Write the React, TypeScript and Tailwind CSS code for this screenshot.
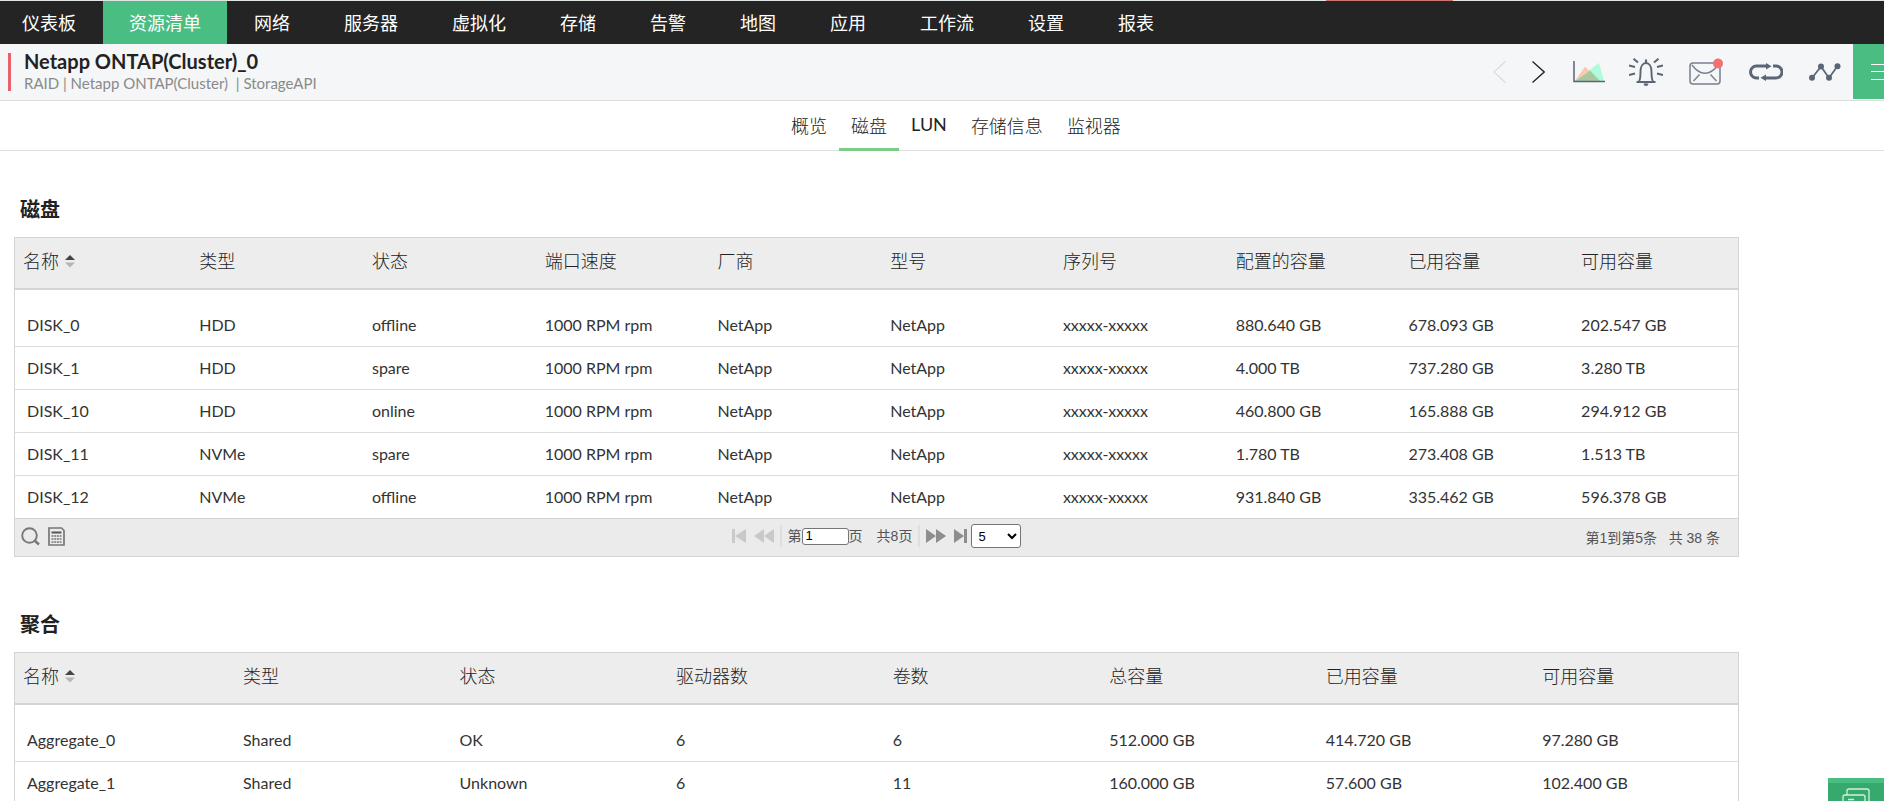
import { useState } from "react";

interface TableData {
    title: string;
    columns: string[];
    rows: string[][];
    total?: number;
    pages?: number;
    colClass: string;
}

const navItems = ["仪表板", "资源清单", "网络", "服务器", "虚拟化", "存储", "告警", "地图", "应用", "工作流", "设置", "报表"];
const tabs = ["概览", "磁盘", "LUN", "存储信息", "监视器"];

const disks: TableData = {
    title: "磁盘",
    columns: ["名称", "类型", "状态", "端口速度", "厂商", "型号", "序列号", "配置的容量", "已用容量", "可用容量"],
    rows: [
        ["DISK_0", "HDD", "offline", "1000 RPM rpm", "NetApp", "NetApp", "xxxxx-xxxxx", "880.640 GB", "678.093 GB", "202.547 GB"],
        ["DISK_1", "HDD", "spare", "1000 RPM rpm", "NetApp", "NetApp", "xxxxx-xxxxx", "4.000 TB", "737.280 GB", "3.280 TB"],
        ["DISK_10", "HDD", "online", "1000 RPM rpm", "NetApp", "NetApp", "xxxxx-xxxxx", "460.800 GB", "165.888 GB", "294.912 GB"],
        ["DISK_11", "NVMe", "spare", "1000 RPM rpm", "NetApp", "NetApp", "xxxxx-xxxxx", "1.780 TB", "273.408 GB", "1.513 TB"],
        ["DISK_12", "NVMe", "offline", "1000 RPM rpm", "NetApp", "NetApp", "xxxxx-xxxxx", "931.840 GB", "335.462 GB", "596.378 GB"],
    ],
    total: 38,
    pages: 8,
    colClass: "w-[10.02%]",
};

const aggregates: TableData = {
    title: "聚合",
    columns: ["名称", "类型", "状态", "驱动器数", "卷数", "总容量", "已用容量", "可用容量"],
    rows: [
        ["Aggregate_0", "Shared", "OK", "6", "6", "512.000 GB", "414.720 GB", "97.280 GB"],
        ["Aggregate_1", "Shared", "Unknown", "6", "11", "160.000 GB", "57.600 GB", "102.400 GB"],
    ],
    colClass: "w-[12.56%]",
};

function ChartIcon() {
    return (
        <svg width="32" height="22" viewBox="0 0 32 22">
            <path d="M2 20 12 6l15 14z" fill="#fbc9b0" />
            <path d="M2 20 26 2l5 18z" fill="#affbdc" />
            <path d="M2 20 17 9.500 27 20z" fill="#a9c8a0" />
            <path d="M2 20 12 6l4.500 3.800z" fill="#fbc9b0" />
            <path d="M1 0v20.500h31" fill="none" stroke="#56657a" strokeWidth="1.500" />
        </svg>
    );
}

function BellIcon() {
    return (
        <svg width="34" height="28" viewBox="0 0 34 28" fill="none" stroke="#5a6675" strokeWidth="1.900">
            <path d="M7.500 24h19M10 23.500c1.300-2 1.500-4 1.500-10 0-5.500 2.500-8.500 5.500-8.500s5.500 3 5.500 8.500c0 6 .2 8 1.500 10" />
            <path d="M17 5V1.500M15.500 25.500c.3 1.800 2.700 1.800 3 0" strokeWidth="2.200" />
            <path d="M4.500.8 9 4.500M29.500.8 25 4.500M0 7.500l6 1.500M34 7.500 28 9M0 17l6-1.500M34 17l-6-1.500" strokeWidth="2.100" />
        </svg>
    );
}

function MailIcon() {
    return (
        <svg width="34" height="28" viewBox="0 0 34 28">
            <rect x="1" y="5" width="30" height="21" rx="3" fill="none" stroke="#77808d" strokeWidth="1.500" />
            <path d="M3 7c8 11 18 11 26 0M4.500 23l6-6.500M27.500 23l-6-6.500" fill="none" stroke="#77808d" strokeWidth="1.400" />
            <circle cx="29" cy="5.500" r="5" fill="#f57070" />
        </svg>
    );
}

function LoopIcon() {
    return (
        <svg width="34" height="18" viewBox="0 0 34 18">
            <path d="M10 15H7.500a5.500 5.500 0 0 1 0-12H18M24 3h3a5.500 5.500 0 0 1 0 12H15" fill="none" stroke="#5a6675" strokeWidth="3" />
            <path d="M17 0l5.500 3.200L17 6.500zM17 11.500l-5.500 3.300L17 18z" fill="#5a6675" />
        </svg>
    );
}

function LineIcon() {
    return (
        <svg width="32" height="18" viewBox="0 0 32 18">
            <path d="M3 15 12 3.500 20 15 28.500 3" fill="none" stroke="#5a6675" strokeWidth="1.700" />
            <circle cx="3" cy="14.800" r="3" fill="#5a6675" />
            <circle cx="12" cy="3.500" r="3" fill="#5a6675" />
            <circle cx="20" cy="14.800" r="3" fill="#5a6675" />
            <circle cx="28.500" cy="3.200" r="3" fill="#5a6675" />
        </svg>
    );
}

function SortIcon() {
    return (
        <svg width="10" height="14" viewBox="0 0 10 14">
            <path d="M0 6 5 1l5 5z" fill="#444" />
            <path d="M0 8.500h10l-5 5z" fill="#b5b5b5" />
        </svg>
    );
}

function Pager({ total, pages }: { total: number; pages: number }) {
    const [page, setPage] = useState("1");
    const [size, setSize] = useState("5");

    return (
        <div className="-mt-px grid h-[39px] grid-cols-[1fr_auto_1fr] items-center border border-[#d4d4d4] bg-[#ebebeb] font-['Liberation_Sans','Noto_Sans_CJK_SC',sans-serif] text-sm text-[#555]">
            <div className="flex items-center gap-2 pb-[3px] pl-1.5">
                <button aria-label="search">
                    <svg width="19" height="19" viewBox="0 0 19 19" fill="none" stroke="#777" strokeWidth="1.900">
                        <circle cx="8.500" cy="8.500" r="7.300" />
                        <path d="m13.500 13.500 4.500 4" strokeWidth="2.400" />
                    </svg>
                </button>
                <button aria-label="columns">
                    <svg width="17" height="19" viewBox="0 0 17 19" fill="none" stroke="#777">
                        <path d="M1 1h12.500L16 3.500V18H1z" strokeWidth="1.700" />
                        <path d="M3.500 5.500h10" strokeWidth="2" stroke="#555" />
                        <path d="M3.500 9h10M3.500 12h10M3.500 15h10" strokeWidth="1.600" strokeDasharray="2 .7" />
                    </svg>
                </button>
            </div>
            <div className="flex items-center pb-[3px]">
                <button aria-label="first page" className="mr-2">
                    <svg width="14" height="14" viewBox="0 0 14 14" fill="#c9c9c9"><path d="M0 0h3v14H0zM14 0v14L3 7z" /></svg>
                </button>
                <button aria-label="previous page">
                    <svg width="20" height="14" viewBox="0 0 20 14" fill="#c9c9c9"><path d="M10 0v14L0 7zM20 0v14L10 7z" /></svg>
                </button>
                <span className="mx-1.5 h-[22px] w-0.5 bg-[#dedede]" />
                <label className="flex items-center">
                    第
                    <input
                        value={page}
                        onChange={(e) => setPage(e.target.value)}
                        className="h-[17px] w-[47px] rounded-[3px] border border-[#767676] bg-white px-[3px] text-[13px] text-black"
                    />
                    页
                </label>
                <span className="ml-3.5">共{pages}页</span>
                <span className="mx-1.5 h-[22px] w-0.5 bg-[#dedede]" />
                <button aria-label="next page" className="mr-2">
                    <svg width="20" height="14" viewBox="0 0 20 14" fill="#8e8e8e"><path d="M0 0v14l10-7zM10 0v14l10-7z" /></svg>
                </button>
                <button aria-label="last page">
                    <svg width="13" height="14" viewBox="0 0 13 14" fill="#8e8e8e"><path d="M0 0v14l10-7zM10 0h3v14h-3z" /></svg>
                </button>
                <select
                    aria-label="page size"
                    value={size}
                    onChange={(e) => setSize(e.target.value)}
                    className="ml-1 h-6 w-[50px] rounded-[3px] border border-[#767676] bg-white pl-0.5 text-[13px] text-black"
                >
                    <option>5</option>
                    <option>10</option>
                    <option>25</option>
                </select>
            </div>
            <div className="pr-[18px] text-right whitespace-pre">第1到第5条   共 {total} 条</div>
        </div>
    );
}

function DataTable({ data }: { data: TableData }) {
    return (
        <section className="mb-[53px]">
            <h2 className="mb-[14px] ml-1.5 text-xl leading-7 font-bold text-[#222]">{data.title}</h2>
            <table className="w-full table-fixed border-collapse border border-[#d4d4d4] text-left">
                <thead>
                    <tr className="h-[51px] border-b-2 border-[#d4d4d4] bg-[#ededed] text-[#222]">
                        {data.columns.map((col, i) => (
                            <th
                                key={col}
                                className={i === 0 ? `${data.colClass} pb-1 pl-2 text-lg leading-7 font-light` : i < data.columns.length - 1 ? `${data.colClass} pb-1 pl-3 text-lg leading-7 font-light` : "pb-1 pl-3 text-lg leading-7 font-light"}
                            >
                                {i === 0 ? (
                                    <button className="flex items-center gap-1.5">{col}<SortIcon /></button>
                                ) : col}
                            </th>
                        ))}
                    </tr>
                </thead>
                <tbody>
                    {data.rows.map((row) => (
                        <tr key={row[0]} className="h-[43px] border-b border-[#dcdcdc] first:h-[58px]">
                            {row.map((cell, i) => (
                                <td key={i} className="pb-[9px] pl-3 align-bottom text-base leading-6">{cell}</td>
                            ))}
                        </tr>
                    ))}
                </tbody>
            </table>
            {data.total && data.pages && <Pager total={data.total} pages={data.pages} />}
        </section>
    );
}

export default function App() {
    const [activeTab, setActiveTab] = useState("磁盘");

    return (
        <div className="h-screen overflow-hidden bg-white font-['Lato','Noto_Sans_CJK_SC',sans-serif] text-[#333]">
            <nav className="relative flex h-11 border-t border-[#dfe5e3] bg-[#242424] text-lg text-white">
                {navItems.map((item, i) => (
                    <a
                        key={item}
                        href="#"
                        className={i === 0 ? "flex items-center pr-[27px] pl-[22px]" : item === "资源清单" ? "flex items-center bg-[#4abd82] px-[26px]" : "flex items-center px-[27px]"}
                    >
                        {item}
                    </a>
                ))}
                {/* red marker on the top edge */}
                <span className="absolute -top-px right-[431px] h-px w-[127px] bg-[#cf7470]" />
            </nav>

            <header className="flex h-[57px] border-b border-[#dcdfe1] bg-[#f4f6f8]">
                <div className="mt-[9px] ml-2 h-[38px] border-l-3 border-[#e8606a] pl-[13px]">
                    <h1 className="-mt-1 text-xl leading-6 font-bold text-[#222]">Netapp ONTAP(Cluster)_0</h1>
                    <p className="text-[15px] leading-5 whitespace-pre text-[#8a8a8a]">RAID | Netapp ONTAP(Cluster)  | StorageAPI</p>
                </div>
                <div className="ml-auto flex items-center">
                    <button aria-label="previous" className="mr-[26px]">
                        <svg width="13" height="22" viewBox="0 0 13 22" fill="none" stroke="#dcdcdc" strokeWidth="1.200"><path d="M12.500.5.8 11l11.700 10.500" /></svg>
                    </button>
                    <button aria-label="next" className="mr-7">
                        <svg width="13" height="22" viewBox="0 0 13 22" fill="none" stroke="#222" strokeWidth="1.300"><path d="M.5.5 12.200 11 .5 21.500" /></svg>
                    </button>
                    <button aria-label="chart" className="mr-6"><ChartIcon /></button>
                    <button aria-label="alarms" className="mr-[26px]"><BellIcon /></button>
                    <button aria-label="mail" className="mr-[26px]"><MailIcon /></button>
                    <button aria-label="links" className="mr-[26px]"><LoopIcon /></button>
                    <button aria-label="trend" className="mr-3"><LineIcon /></button>
                    <button aria-label="menu" className="flex h-[55px] w-[31px] justify-end self-start bg-[#4abd82] pt-5">
                        <svg width="13" height="16" viewBox="0 0 13 16" stroke="#fff"><path d="M0 .5h13M0 7.500h13M0 15.500h13" /></svg>
                    </button>
                </div>
            </header>

            <div className="flex h-[50px] justify-center border-b border-[#dfe0e1] pl-7 text-lg text-[#222]">
                {tabs.map((tab) => (
                    <button
                        key={tab}
                        onClick={() => setActiveTab(tab)}
                        className={activeTab === tab ? "-mb-px border-b-3 border-[#7bcb86] px-3 font-['Noto_Sans_CJK_SC',sans-serif] font-light" : tab === "LUN" ? "-mb-px border-b-3 border-transparent px-3 pb-0.5" : "-mb-px border-b-3 border-transparent px-3 font-['Noto_Sans_CJK_SC',sans-serif] font-light"}
                    >
                        {tab}
                    </button>
                ))}
            </div>

            <main className="mr-[145px] ml-3.5 pt-[44px]">
                <DataTable data={disks} />
                <DataTable data={aggregates} />
            </main>

            <button aria-label="chat" className="fixed right-0 bottom-0 flex h-[23px] w-14 justify-center border-t-5 border-[#4abd82] bg-[#36a96c] pt-[5px]">
                <svg width="28" height="13" viewBox="0 0 28 13" fill="none" stroke="#d5f0e0" strokeWidth="1.300">
                    <path d="M5 7V3a2 2 0 0 1 2-2h18a2 2 0 0 1 2 2v10M1 13V9a2 2 0 0 1 2-2h18a2 2 0 0 1 2 2v4M6 11.500h6" />
                </svg>
            </button>
        </div>
    );
}
